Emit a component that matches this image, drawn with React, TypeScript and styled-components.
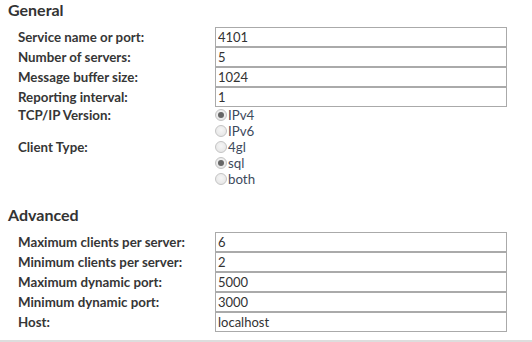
import { Fragment } from 'react';
import styled, { createGlobalStyle } from 'styled-components';

const GlobalStyle = createGlobalStyle`
	body {
		margin: 0;
		background: #ffffff;
		font-family: Lato, 'Open Sans', sans-serif;
		color: #333333;
	}
`;

const Page = styled.div`
	width: 532px;
	height: 342px;
	box-sizing: border-box;
	border-bottom: 2px solid #dddddd;
	overflow: hidden;
`;

const Section = styled.section`
	padding-left: 8px;
	margin-bottom: 18px;
`;

const Heading = styled.h3`
	margin: 0;
	height: 27px;
	line-height: 20px;
	font-size: 16px;
	font-weight: 700;
	color: #333333;
`;

const Rows = styled.div`
	display: grid;
	grid-template-columns: 197px 292px;
	padding-left: 10px;
`;

const Label = styled.div<{ $align?: 'center' | 'start' }>`
	font-size: 13.3px;
	font-weight: 700;
	color: #363636;
	line-height: ${({ $align }) => ($align === 'start' ? '16px' : '20px')};
`;

const TextInput = styled.input`
	box-sizing: border-box;
	width: 292px;
	height: 20px;
	margin: 0;
	padding: 0 2px;
	border: 1px solid #aaaaaa;
	font-family: Lato, 'Open Sans', sans-serif;
	font-size: 13px;
	color: #333333;
	outline: none;
`;

const RadioList = styled.div`
	display: flex;
	flex-direction: column;
`;

const RadioLabel = styled.label`
	display: flex;
	align-items: center;
	height: 16px;
	font-size: 13.3px;
	color: #3d4a5c;
`;

const Radio = styled.input`
	appearance: none;
	box-sizing: border-box;
	width: 12px;
	height: 12px;
	margin: 0 1px 0 0;
	border-radius: 50%;
	border: 1px solid #c4c4c4;
	background: radial-gradient(circle at 50% 40%, #f6f6f6 0%, #e2e2e2 100%);
	position: relative;

	&:checked::after {
		content: '';
		position: absolute;
		left: 2px;
		top: 2px;
		width: 6px;
		height: 6px;
		border-radius: 50%;
		background: #666666;
	}
`;

type Field = { label: string; value: string };

const general: Field[] = [
	{ label: 'Service name or port:', value: '4101' },
	{ label: 'Number of servers:', value: '5' },
	{ label: 'Message buffer size:', value: '1024' },
	{ label: 'Reporting interval:', value: '1' },
];

const advanced: Field[] = [
	{ label: 'Maximum clients per server:', value: '6' },
	{ label: 'Minimum clients per server:', value: '2' },
	{ label: 'Maximum dynamic port:', value: '5000' },
	{ label: 'Minimum dynamic port:', value: '3000' },
	{ label: 'Host:', value: 'localhost' },
];

const RadioGroup = ({ name, options, checked }: { name: string; options: string[]; checked: string }) => (
	<RadioList>
		{options.map((o) => (
			<RadioLabel key={o}>
				<Radio type="radio" name={name} defaultChecked={o === checked} />
				{o}
			</RadioLabel>
		))}
	</RadioList>
);

const FieldRows = ({ fields }: { fields: Field[] }) => (
	<>
		{fields.map((f) => (
			<Fragment key={f.label}>
				<Label>{f.label}</Label>
				<TextInput defaultValue={f.value} />
			</Fragment>
		))}
	</>
);

const App = () => (
	<>
		<GlobalStyle />
		<Page>
			<Section>
				<Heading>General</Heading>
				<Rows>
					<FieldRows fields={general} />
					<Label $align="start">TCP/IP Version:</Label>
					<RadioGroup name="ip" options={['IPv4', 'IPv6']} checked="IPv4" />
					<Label $align="start">Client Type:</Label>
					<RadioGroup name="client" options={['4gl', 'sql', 'both']} checked="sql" />
				</Rows>
			</Section>
			<Section>
				<Heading>Advanced</Heading>
				<Rows>
					<FieldRows fields={advanced} />
				</Rows>
			</Section>
		</Page>
	</>
);

export default App;
